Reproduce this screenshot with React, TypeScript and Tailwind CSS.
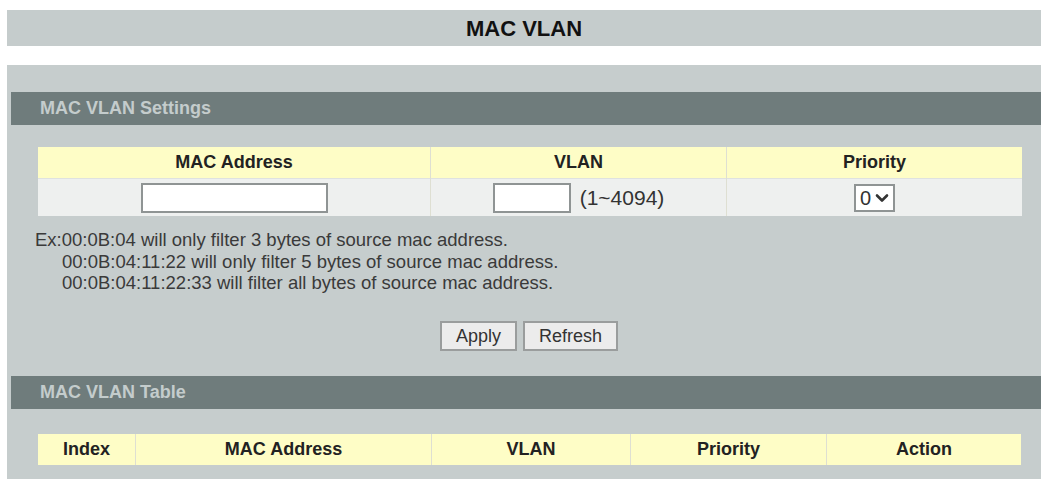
const sectionBar =
  "h-[33px] bg-[#6f7c7c] flex items-center pl-[29px] text-[18px] font-bold text-[#c4cccc]";

function SectionBar({ title }: { title: string }) {
  return <div className={sectionBar}>{title}</div>;
}

const headCell =
  "h-[31px] bg-[#fefdc6] flex items-center justify-center text-[18px] font-bold text-[#222]";

export default function App() {
  return (
    <div className="w-[1046px] h-[479px] overflow-hidden bg-white pt-[10px] pl-[7px] pr-[5px] font-['Liberation_Sans',Arial,sans-serif]">
      <div className="h-[36px] bg-[#c5cccc] flex items-center justify-center text-[22px] font-bold text-[#111]">
        MAC VLAN
      </div>

      <div className="mt-[19px] h-[420px] bg-[#c6cdcd] pt-[27px] pl-[4px]">
        <SectionBar title="MAC VLAN Settings" />

        {/* add entry form */}
        <div className="ml-[27px] mr-[21px] mt-[22px] grid grid-cols-[392px_295px_295px] gap-x-px bg-[#dedfd2]">
          <div className={headCell}>MAC Address</div>
          <div className={headCell}>VLAN</div>
          <div className={headCell}>Priority</div>

          <div className="h-[38px] bg-[#eef0ef] flex items-center justify-center border-t border-[#dfe2e0]">
            <input className="w-[187px] h-[30px] bg-white border-2 border-[#8f9494] outline-none" />
          </div>
          <div className="h-[38px] bg-[#eef0ef] flex items-center justify-center gap-[9px] border-t border-[#dfe2e0]">
            <input className="w-[78px] h-[30px] bg-white border-2 border-[#8f9494] outline-none" />
            <span className="text-[21px] text-[#333]">(1~4094)</span>
          </div>
          <div className="h-[38px] bg-[#eef0ef] flex items-center justify-center border-t border-[#dfe2e0]">
            <div className="w-[41px] h-[28px] bg-white border-2 border-[#8f9494] flex items-center pl-[4px] gap-[4px] text-[20px] text-[#333]">
              0
              <svg width="14" height="10" viewBox="0 0 14 10" fill="none" stroke="#333" strokeWidth="2.6" strokeLinecap="round" strokeLinejoin="round">
                <path d="M2 2.5 L7 7.5 L12 2.5" />
              </svg>
            </div>
          </div>
        </div>

        <div className="mt-[13px] ml-[24px] text-[18.5px] leading-[21.5px] text-[#3a3a3a]">
          <p>Ex:00:0B:04 will only filter 3 bytes of source mac address.</p>
          <p className="pl-[27px]">00:0B:04:11:22 will only filter 5 bytes of source mac address.</p>
          <p className="pl-[27px]">00:0B:04:11:22:33 will filter all bytes of source mac address.</p>
        </div>

        <div className="mt-[27px] ml-[27px] mr-[21px] flex justify-center gap-[6px]">
          <button className="h-[30px] px-[14px] bg-[#ececec] border-2 border-[#9a9d9d] text-[18px] text-[#333]">
            Apply
          </button>
          <button className="h-[30px] px-[14px] bg-[#ececec] border-2 border-[#9a9d9d] text-[18px] text-[#333]">
            Refresh
          </button>
        </div>

        <div className="mt-[25px]">
          <SectionBar title="MAC VLAN Table" />
        </div>

        <div className="ml-[27px] mr-[21px] mt-[25px] grid grid-cols-[97px_295px_198px_195px_194px] gap-x-px bg-[#dedfd2]">
          <div className={headCell}>Index</div>
          <div className={headCell}>MAC Address</div>
          <div className={headCell}>VLAN</div>
          <div className={headCell}>Priority</div>
          <div className={headCell}>Action</div>
        </div>
      </div>
    </div>
  );
}
